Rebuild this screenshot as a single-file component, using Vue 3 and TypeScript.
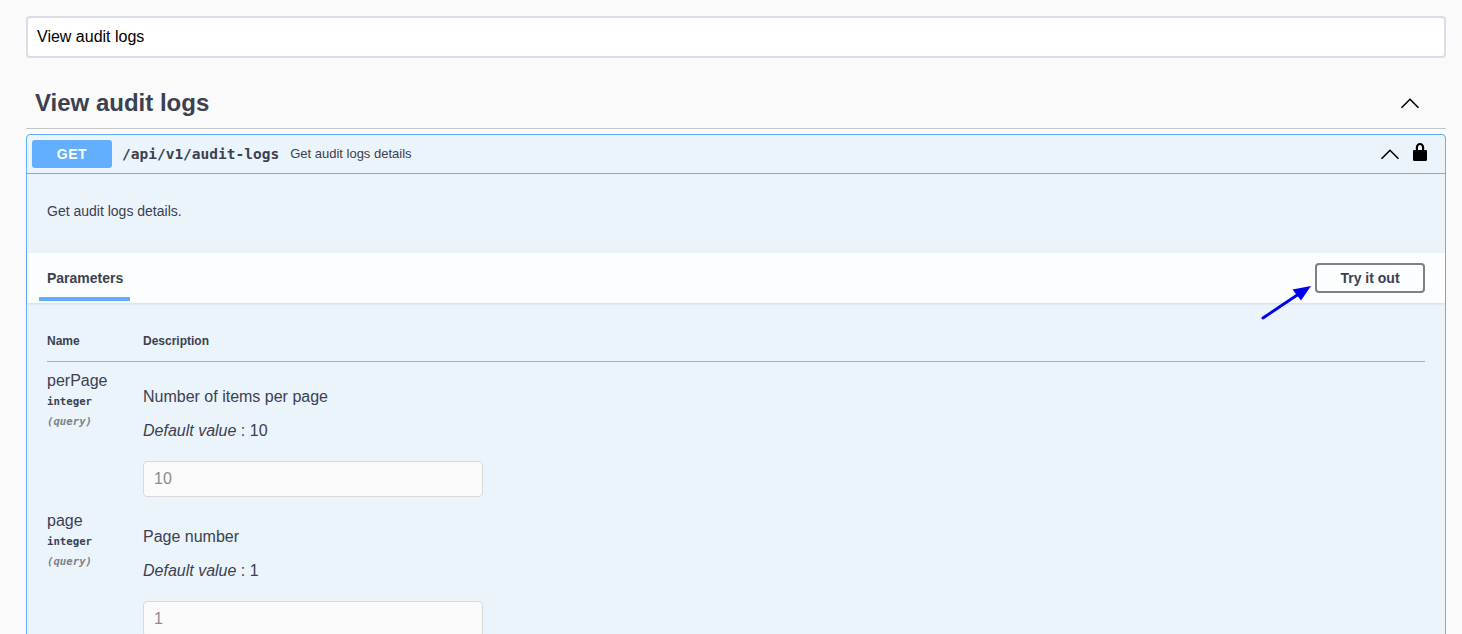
<script setup lang="ts">
const params = [
  { name: "perPage", desc: "Number of items per page", def: "10" },
  { name: "page", desc: "Page number", def: "1" },
];
</script>

<template>
  <div class="page">
    <div class="filter">View audit logs</div>

    <div class="tag">
      <h3>View audit logs</h3>
      <svg class="chevron" viewBox="0 0 20 20"><path d="M1.5 14.8 10 6.3l8.5 8.5" /></svg>
    </div>

    <div class="opblock">
      <div class="summary">
        <span class="method">GET</span>
        <span class="path">/api/v1/audit-logs</span>
        <span class="summary-text">Get audit logs details</span>
        <svg class="chevron small" viewBox="0 0 20 20"><path d="M1.5 14.8 10 6.3l8.5 8.5" /></svg>
        <svg class="lock" viewBox="0 0 20 20">
          <path d="M15.8 8H14.2V5.6C14.2 2.7 12.3 1 10 1S5.8 2.7 5.8 5.6V8H4.2C3.5 8 3 8.5 3 9.2v8.6c0 .7.5 1.2 1.2 1.2h11.600c.7 0 1.200-.5 1.200-1.200V9.200c0-.7-.5-1.200-1.200-1.200zM8 8V5.600C8 3.900 8.900 3 10 3s2 .9 2 2.600V8H8z" />
        </svg>
      </div>

      <div class="description">Get audit logs details.</div>

      <div class="section-header">
        <div class="tab">Parameters</div>
        <button class="try-btn">Try it out</button>
        <svg class="arrow" width="60" height="44" viewBox="0 0 60 44">
          <path d="M3 38 38 14.5" stroke="#0000f0" stroke-width="3" stroke-linecap="round" fill="none" />
          <path d="M51 6 41 20.5 32.5 9.5z" fill="#0000f0" />
        </svg>
      </div>

      <div class="params">
        <div class="head">
          <div class="col-name">Name</div>
          <div>Description</div>
        </div>
        <div v-for="p in params" :key="p.name" class="row">
          <div class="col-name">
            <div class="param-name">{{ p.name }}</div>
            <div class="param-type">integer</div>
            <div class="param-in">(query)</div>
          </div>
          <div class="col-desc">
            <p class="desc-text">{{ p.desc }}</p>
            <p class="default"><i>Default value</i> : {{ p.def }}</p>
            <input class="value" :placeholder="p.def" disabled />
          </div>
        </div>
      </div>
    </div>
  </div>
</template>

<style>
html,
body {
  margin: 0;
  background: #fafafa;
}
</style>

<style scoped>
.page {
  box-sizing: border-box;
  height: 634px;
  overflow: hidden;
  padding: 16px 16px 0 26px;
  font-family: "Liberation Sans", Arial, sans-serif;
  color: #3b4151;
  background: #fafafa;
}
.filter {
  box-sizing: border-box;
  height: 42px;
  padding-left: 9px;
  border: 2px solid #d8dde7;
  border-radius: 4px;
  background: #fff;
  color: #000;
  font-size: 16px;
  line-height: 38px;
}
.tag {
  display: flex;
  align-items: center;
  justify-content: space-between;
  box-sizing: border-box;
  height: 71px;
  margin-bottom: 5px;
  padding: 19px 26px 0 9px;
  border-bottom: 1px solid #c4c6cb;
}
.tag h3 {
  margin: 0;
  font-size: 24px;
  font-weight: 700;
}
.chevron {
  width: 20px;
  height: 20px;
  flex: none;
  fill: none;
  stroke: #000;
  stroke-width: 1.6;
}
.opblock {
  border: 1px solid #61affe;
  border-radius: 4px;
  background: #ebf3fb;
}
.summary {
  display: flex;
  align-items: center;
  box-sizing: border-box;
  height: 39px;
  padding: 0 15px 0 5px;
  border-bottom: 1px solid #61affe;
}
.method {
  width: 80px;
  height: 28px;
  margin-right: 10px;
  border-radius: 3px;
  background: #61affe;
  color: #fff;
  font-size: 14px;
  font-weight: 700;
  letter-spacing: 0.5px;
  line-height: 28px;
  text-align: center;
}
.path {
  font-family: "DejaVu Sans Mono", monospace;
  font-size: 14.5px;
  font-weight: 700;
}
.summary-text {
  flex: 1;
  margin-left: 11px;
  font-size: 13px;
  line-height: 15px;
  margin-top: -1px;
}
.chevron.small {
  margin-right: 10px;
}
.lock {
  width: 20px;
  height: 20px;
  flex: none;
  margin-top: -4px;
  fill: #000;
}
.description {
  box-sizing: border-box;
  height: 79px;
  padding: 30px 20px 0;
  font-size: 14px;
  line-height: 15px;
}
.section-header {
  position: relative;
  display: flex;
  align-items: flex-start;
  justify-content: space-between;
  box-sizing: border-box;
  height: 50px;
  padding: 10px 20px 0 12px;
  background: rgba(255, 255, 255, 0.8);
  box-shadow: 0 1px 2px rgba(0, 0, 0, 0.1);
}
.tab {
  box-sizing: border-box;
  width: 91px;
  height: 38px;
  padding: 6px 8px 0;
  border-bottom: 4px solid #61affe;
  font-size: 14px;
  font-weight: 700;
  line-height: 18px;
}
.try-btn {
  box-sizing: border-box;
  width: 110px;
  height: 30px;
  padding: 0;
  border: 2px solid #808080;
  border-radius: 4px;
  background: transparent;
  color: #3b4151;
  font-family: inherit;
  font-size: 14px;
  font-weight: 700;
}
.arrow {
  position: absolute;
  top: 27px;
  right: 125px;
}
.params {
  padding: 20px 20px 0;
}
.head {
  display: flex;
  box-sizing: border-box;
  height: 39px;
  border-bottom: 1px solid #abaeb6;
  font-size: 12px;
  font-weight: 700;
  line-height: 36px;
}
.col-name {
  flex: none;
  width: 96px;
}
.row {
  display: flex;
  box-sizing: border-box;
  height: 140px;
}
.param-name {
  margin-top: 9px;
  font-size: 16px;
  line-height: 20px;
}
.param-type {
  margin-top: 2px;
  font-family: "DejaVu Sans Mono", monospace;
  font-size: 10.7px;
  font-weight: 700;
  line-height: 18px;
}
.param-in {
  margin-top: 2px;
  color: #7e8188;
  font-family: "DejaVu Sans Mono", monospace;
  font-size: 10.7px;
  font-style: italic;
  font-weight: 700;
  line-height: 18px;
}
.col-desc {
  flex: 1;
}
.desc-text,
.default {
  margin: 0;
  font-size: 16px;
  line-height: 20px;
}
.desc-text {
  margin-top: 25px;
}
.default {
  margin-top: 14px;
}
.value {
  display: block;
  box-sizing: border-box;
  width: 340px;
  height: 36px;
  margin-top: 20px;
  padding: 0 10px;
  border: 1px solid #d9d9d9;
  border-radius: 4px;
  background: #fafafa;
  font-family: inherit;
  font-size: 16px;
}
.value::placeholder {
  color: #8c8c8c;
  opacity: 1;
}
</style>
